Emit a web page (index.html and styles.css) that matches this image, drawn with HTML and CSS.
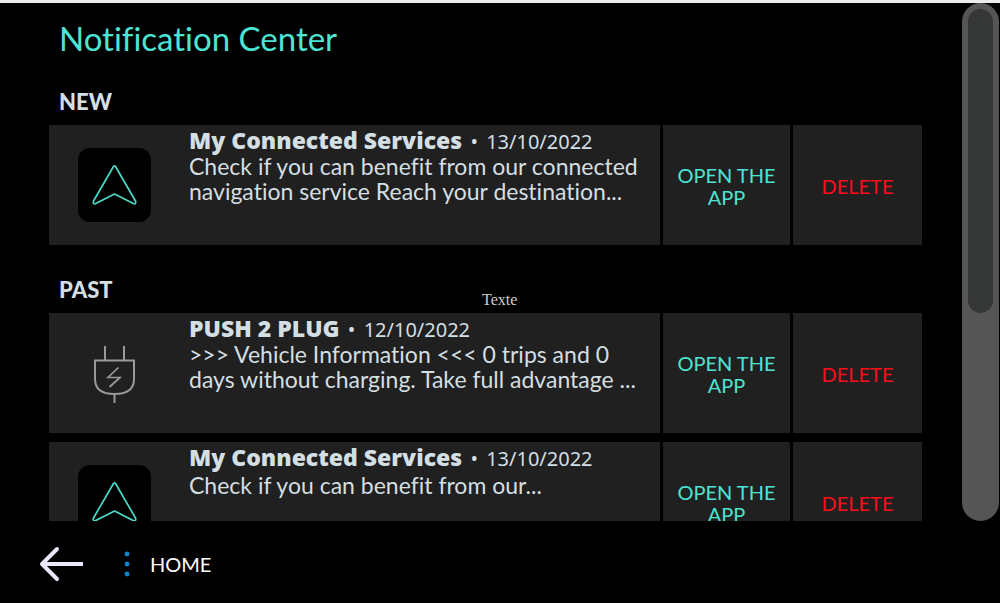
FILE: index.html
```html
<!DOCTYPE html>
<html lang="en">
<head>
<meta charset="utf-8">
<title>Notification Center</title>
<link rel="stylesheet" href="styles.css">
</head>
<body>
<svg class="defs" aria-hidden="true">
  <symbol id="nav-arrow" viewBox="0 0 73 74">
    <path d="M35.500 18.500q1-1.200 2 0L57.500 53q1 3.400-2.200 2.600L36.500 46 17.700 55.600q-3.200.8-2.200-2.600Z" fill="none" stroke="#4ad9c8" stroke-width="1.700" stroke-linejoin="round"/>
  </symbol>
</svg>
<div class="screen">
  <main class="content">
    <h1 class="title">Notification Center</h1>

    <section class="group">
      <h2 class="group-name">NEW</h2>
      <article class="card">
        <div class="message">
          <div class="icon-cell"><svg class="app-icon"><use href="#nav-arrow"/></svg></div>
          <div class="copy">
            <div class="heading"><h3 class="name">My Connected Services</h3><span class="dot">•</span><time class="date">13/10/2022</time></div>
            <p class="text">Check if you can benefit from our connected<br>navigation service Reach your destination...</p>
          </div>
        </div>
        <button class="action open">OPEN THE APP</button>
        <button class="action delete">DELETE</button>
      </article>
    </section>

    <section class="group past">
      <span class="label">Texte</span>
      <h2 class="group-name">PAST</h2>
      <article class="card">
        <div class="message">
          <div class="icon-cell">
            <svg class="plug-icon" viewBox="0 0 73 74" fill="none" stroke="#999" stroke-width="2">
              <path d="M27 10v14M46 10v14M17 24.500H56V43q0 15-19.500 15T17 43ZM36.500 58v9"/>
              <path d="M40.500 31.500 30 41.500H42L31.500 51" stroke-width="1.700"/>
            </svg>
          </div>
          <div class="copy">
            <div class="heading"><h3 class="name">PUSH 2 PLUG</h3><span class="dot">•</span><time class="date">12/10/2022</time></div>
            <p class="text">&gt;&gt;&gt; Vehicle Information &lt;&lt;&lt; 0 trips and 0<br>days without charging. Take full advantage ...</p>
          </div>
        </div>
        <button class="action open">OPEN THE APP</button>
        <button class="action delete">DELETE</button>
      </article>
      <article class="card">
        <div class="message">
          <div class="icon-cell"><svg class="app-icon"><use href="#nav-arrow"/></svg></div>
          <div class="copy">
            <div class="heading"><h3 class="name">My Connected Services</h3><span class="dot">•</span><time class="date">13/10/2022</time></div>
            <p class="text short">Check if you can benefit from our...</p>
          </div>
        </div>
        <button class="action open">OPEN THE APP</button>
        <button class="action delete">DELETE</button>
      </article>
    </section>
  </main>
  <div class="track"><div class="thumb"></div></div>
</div>
<footer class="footer">
  <button class="back" aria-label="Back">
    <svg width="46" height="36" viewBox="0 0 46 36" fill="none" stroke="#ece6fa" stroke-width="4"><path d="M3 18H44"/><path d="M18 3 3 18 18 33" stroke-linecap="round" stroke-linejoin="round"/></svg>
  </button>
  <svg class="dots" width="6" height="26" viewBox="0 0 6 26" fill="#0a84d0"><circle cx="3" cy="3" r="2.400"/><circle cx="3" cy="13" r="2.400"/><circle cx="3" cy="23" r="2.400"/></svg>
  <a class="home" href="#">HOME</a>
</footer>
</body>
</html>
```

FILE: styles.css
```css
* { box-sizing: border-box; }
body {
  margin: 0;
  height: 100vh;
  display: flex;
  flex-direction: column;
  border-top: 3px solid #ececec;
  background: #000;
  color: #d3dfe3;
  font-family: Lato, sans-serif;
  font-variant-ligatures: none;
}
h1, h2, h3, p { margin: 0; }
button { border: 0; padding: 0; font: inherit; }
.defs { position: absolute; width: 0; height: 0; }
.screen { flex: 1; min-height: 0; display: flex; padding-right: 1px; }
.content { flex: 1; padding: 0 40px 0 49px; overflow: hidden; }
.title {
  padding: 15px 10px 0;
  font-size: 33px;
  line-height: 40px;
  font-weight: 400;
  color: #4ce4d5;
}
.group { display: flex; flex-direction: column; gap: 9px; padding-top: 30px; }
.past { position: relative; padding-top: 31px; }
.group-name { padding-left: 10px; font-size: 22px; line-height: 28px; font-weight: 900; }
.label {
  position: absolute;
  top: 45px;
  left: 433px;
  font: 16px/20px "Liberation Serif", serif;
  color: #ccc;
}
.card {
  display: grid;
  grid-template-columns: 1fr 127px 129px;
  gap: 3px;
  min-height: 120px;
}
.message, .action { background: #202020; }
.message { display: flex; }
.icon-cell { width: 140px; padding: 23px 0 0 29px; }
.app-icon, .plug-icon { display: block; width: 73px; height: 74px; }
.app-icon { background: #000; border-radius: 12px; }
.copy { flex: 1; padding-top: 3px; white-space: nowrap; }
.heading { display: flex; align-items: baseline; line-height: 25px; font-family: "Noto Sans", sans-serif; }
.name { font-family: "Open Sans", sans-serif; font-size: 23px; font-weight: 800; }
.dot { width: 24px; text-align: center; font-size: 20px; }
.date { font-size: 20px; }
.text { font-size: 23px; line-height: 25px; }
.short { padding-top: 2px; }
.action { padding: 2px 10px 0; font-size: 20px; line-height: 22px; cursor: pointer; }
.open { color: #4ce4d5; }
.delete { color: #fb0d1b; }
.track { width: 37px; padding: 6px; border-radius: 19px; background: #555; }
.thumb { height: 60%; border-radius: 13px; background: #353736; }
.footer { height: 82px; display: flex; align-items: center; padding: 4px 0 0 39px; }
.back { display: flex; background: none; cursor: pointer; }
.dots { margin: 0 20px 0 39px; }
.home { color: #fff; font-size: 20px; line-height: 26px; text-decoration: none; }
```
